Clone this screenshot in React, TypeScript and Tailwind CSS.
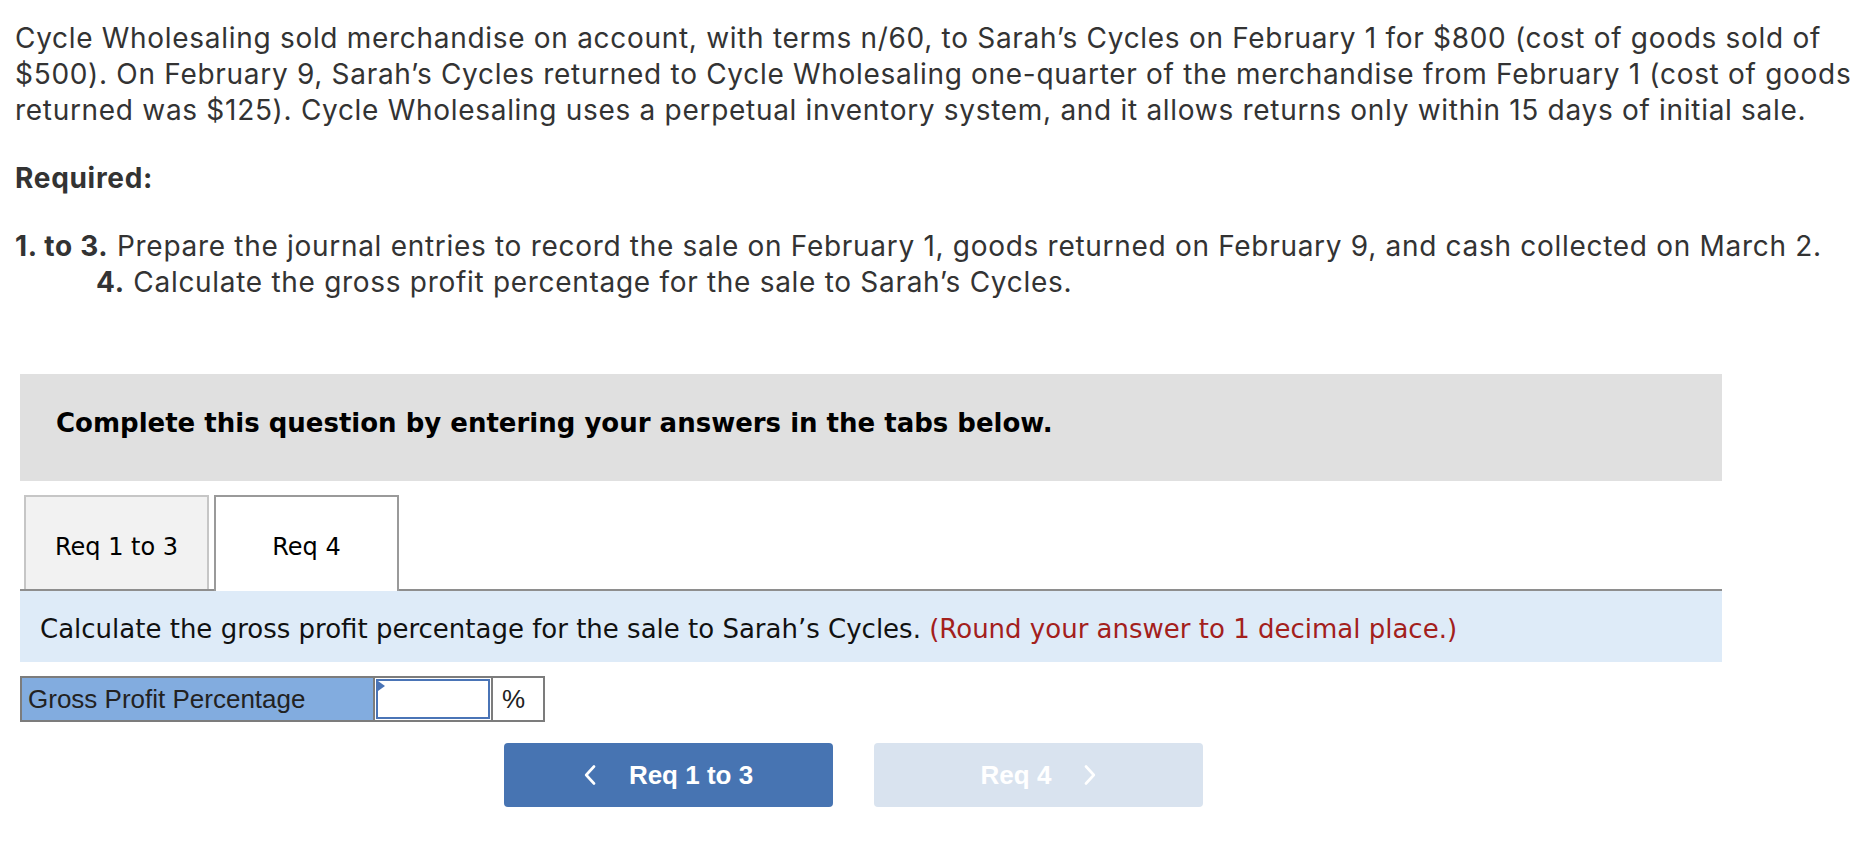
import React from 'react';

const SANS = { fontFamily: 'Inter, "Open Sans", sans-serif' };

function Chevron({ dir }: { dir: 'left' | 'right' }) {
  return (
    <svg width="12" height="20" viewBox="0 0 12 20" fill="none">
      <polyline
        points={dir === 'left' ? '10,1.5 2.2,10 10,18.5' : '2,1.5 9.8,10 2,18.5'}
        stroke="currentColor"
        strokeWidth="2.6"
        strokeLinecap="round"
        strokeLinejoin="round"
      />
    </svg>
  );
}

export default function App() {
  return (
    <div className="min-h-screen bg-white pb-10">
      {/* problem statement */}
      <div className="px-[15px] pt-[20px] text-[28px] leading-[36px] tracking-[0.7px] text-[#333]" style={SANS}>
        <p>
          Cycle Wholesaling sold merchandise on account, with terms n/60, to Sarah’s Cycles on February 1 for $800 (cost of goods sold of
          <br />
          $500). On February 9, Sarah’s Cycles returned to Cycle Wholesaling one-quarter of the merchandise from February 1 (cost of goods
          <br />
          returned was $125). Cycle Wholesaling uses a perpetual inventory system, and it allows returns only within 15 days of initial sale.
        </p>
        <p className="mt-[32px] font-bold">Required:</p>
        <p className="mt-[32px]">
          <b>1. to 3.</b> Prepare the journal entries to record the sale on February 1, goods returned on February 9, and cash collected on March 2.
        </p>
        <p className="pl-[81px]">
          <b>4.</b> Calculate the gross profit percentage for the sale to Sarah’s Cycles.
        </p>
      </div>

      {/* question box */}
      <div className="ml-[20px] mt-[74px] w-[1702px]">
        <div
          className="flex h-[107px] items-center bg-[#e0e0e0] pb-[8px] pl-[36px] text-[26px] font-bold text-black"
          style={{ fontFamily: '"DejaVu Sans", Verdana, sans-serif' }}
        >
          Complete this question by entering your answers in the tabs below.
        </div>

        <div
          className="mt-[14px] flex gap-[5px] border-b-2 border-[#8e8e8e] pl-[4px] text-[24px] text-black"
          style={{ fontFamily: '"DejaVu Sans", Verdana, sans-serif' }}
        >
          <div className="flex h-[94px] w-[185px] items-center justify-center border-2 border-b-0 border-[#c6c6c6] bg-[#f2f2f2] pt-[8px]">
            Req 1 to 3
          </div>
          <div className="-mb-[2px] flex h-[96px] w-[185px] items-center justify-center border-2 border-b-0 border-[#9a9a9a] bg-white pt-[6px]">
            Req 4
          </div>
        </div>

        <div
          className="flex h-[71px] items-center bg-[#deebf8] pl-[20px] pt-[6px] text-[26px] text-[#111]"
          style={{ fontFamily: '"DejaVu Sans", Verdana, sans-serif' }}
        >
          <span>
            Calculate the gross profit percentage for the sale to Sarah’s Cycles.{' '}
            <span className="text-[#a3201c]">(Round your answer to 1 decimal place.)</span>
          </span>
        </div>

        <div
          className="mt-[14px] flex h-[46px] w-[525px] border-2 border-[#7c7c7c] text-[26px] text-[#222]"
          style={{ fontFamily: '"Liberation Sans", Arial, sans-serif' }}
        >
          <div className="flex w-[353px] items-center border-r-2 border-[#7c7c7c] bg-[#82acdf] pl-[6px]">
            Gross Profit Percentage
          </div>
          <div className="relative w-[116px] bg-white p-[1px]">
            <div className="h-full w-full border-2 border-[#4a74b6] bg-white" />
            <div className="absolute left-[3px] top-[3px] h-0 w-0 border-b-[5px] border-l-[7px] border-t-[5px] border-b-transparent border-l-[#4a74b6] border-t-transparent" />
          </div>
          <div className="flex flex-1 items-center border-l-2 border-[#7c7c7c] bg-white pl-[9px]">%</div>
        </div>

        <div
          className="mt-[21px] flex gap-[41px] pl-[484px] text-[26px] font-bold text-white"
          style={{ fontFamily: '"Liberation Sans", Arial, sans-serif' }}
        >
          <button className="flex h-[64px] w-[329px] items-center justify-center gap-[33px] rounded-[4px] bg-[#4774b2]">
            <Chevron dir="left" />
            <span>Req 1 to 3</span>
          </button>
          <button className="flex h-[64px] w-[329px] items-center justify-center gap-[33px] rounded-[4px] bg-[#d9e3ef]">
            <span>Req 4</span>
            <Chevron dir="right" />
          </button>
        </div>
      </div>
    </div>
  );
}
